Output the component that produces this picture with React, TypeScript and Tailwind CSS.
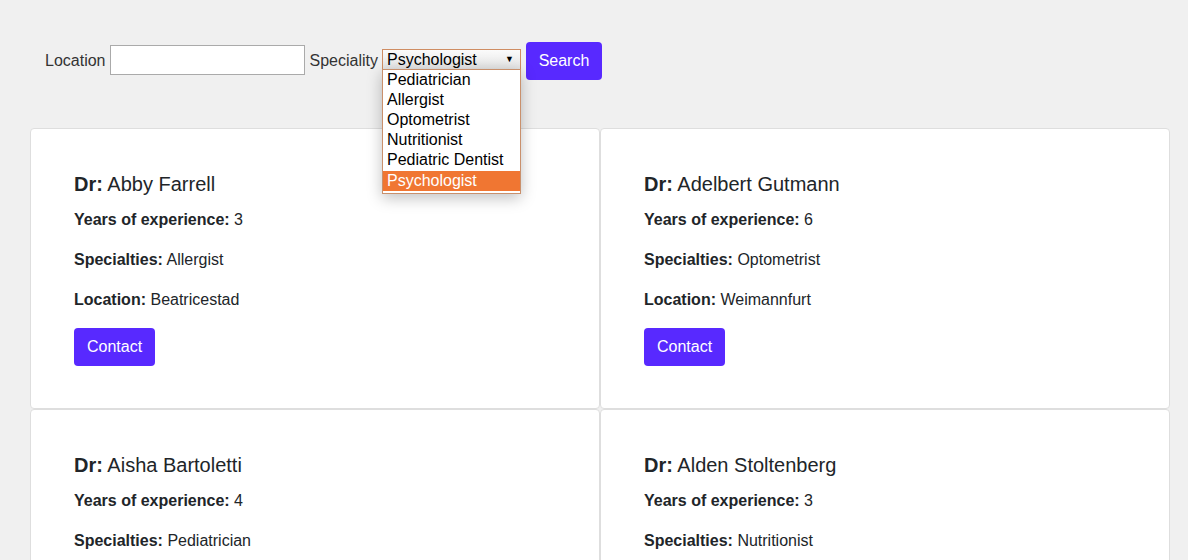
import React from 'react';

interface Doctor {
  name: string;
  years: number;
  specialty: string;
  location: string;
}

const doctors: Doctor[] = [
  { name: 'Abby Farrell', years: 3, specialty: 'Allergist', location: 'Beatricestad' },
  { name: 'Adelbert Gutmann', years: 6, specialty: 'Optometrist', location: 'Weimannfurt' },
  { name: 'Aisha Bartoletti', years: 4, specialty: 'Pediatrician', location: 'Lake Raven' },
  { name: 'Alden Stoltenberg', years: 3, specialty: 'Nutritionist', location: 'Port Elmore' },
];

const specialities = [
  'Pediatrician',
  'Allergist',
  'Optometrist',
  'Nutritionist',
  'Pediatric Dentist',
  'Psychologist',
];

function SpecialitySelect() {
  const selected = 'Psychologist';
  return (
    <div className="relative">
      <div className="flex items-center justify-between w-[139px] h-[21px] border border-[#cf8d63] bg-gradient-to-b from-[#fbfbfb] to-[#e4e4e4] pl-[4px] pr-[6px] text-[16px] leading-[19px] text-black">
        <span>{selected}</span>
        <span className="text-[9px] leading-none">▼</span>
      </div>
      <ul className="absolute left-0 top-[20px] z-10 w-[139px] border border-[#c9906c] bg-white pb-[2px] shadow-[0_4px_14px_rgba(0,0,0,0.25)]">
        {specialities.map((s) => (
          <li
            key={s}
            className={
              s === selected
                ? 'h-[20px] mt-px pl-[4px] text-[16px] leading-[20px] bg-[#f07632] text-white'
                : 'h-[20px] pl-[4px] text-[16px] leading-[20px] text-black'
            }
          >
            {s}
          </li>
        ))}
      </ul>
    </div>
  );
}

function DoctorCard({ doctor }: { doctor: Doctor }) {
  return (
    <div className="bg-white border border-[#dedede] rounded-[4px] px-[43px] pt-[43px] pb-[42px]">
      <h3 className="text-[20px] leading-6 mb-[12px]">
        <span className="font-bold">Dr:</span> {doctor.name}
      </h3>
      <p className="text-[16px] leading-6 mb-4">
        <span className="font-bold">Years of experience:</span> {doctor.years}
      </p>
      <p className="text-[16px] leading-6 mb-4">
        <span className="font-bold">Specialties:</span> {doctor.specialty}
      </p>
      <p className="text-[16px] leading-6 mb-[16px]">
        <span className="font-bold">Location:</span> {doctor.location}
      </p>
      <button className="h-[38px] px-[13px] rounded-[4px] bg-[#5829ff] text-white text-[16px]">
        Contact
      </button>
    </div>
  );
}

export default function App() {
  return (
    <div className="min-h-screen bg-[#f0f0f0] pt-[42px] font-['Liberation_Sans',Arial,sans-serif] text-[#212529]">
      <div className="flex items-center h-[38px] pl-[45px] text-[16px] text-[#333]">
        <label className="mr-[4px]">Location</label>
        <input className="w-[195px] h-[30px] border border-[#aaaaaa] bg-white mr-[5px] mb-[2px]" />
        <label className="mr-[4px]">Speciality</label>
        <div className="mb-[4px] mr-[5px]">
          <SpecialitySelect />
        </div>
        <button className="h-[38px] w-[76px] rounded-[4px] bg-[#5829ff] text-white text-[16px]">
          Search
        </button>
      </div>

      <div className="grid grid-cols-2 w-[1140px] ml-[30px] mt-[48px]">
        {doctors.map((d) => (
          <DoctorCard key={d.name} doctor={d} />
        ))}
      </div>
    </div>
  );
}
